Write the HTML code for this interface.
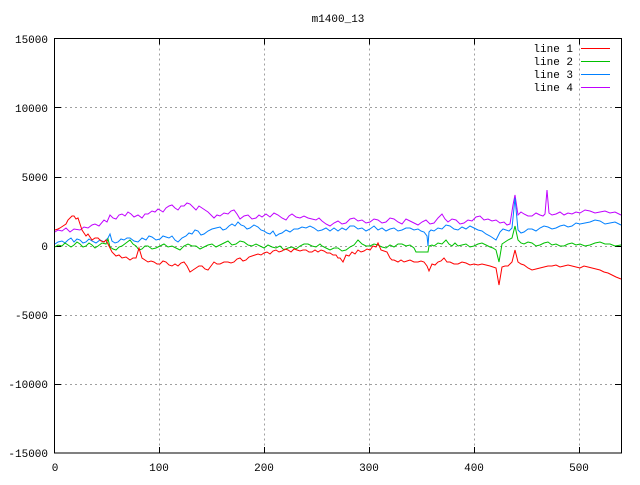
<!DOCTYPE html>
<html><head><style>
html,body{margin:0;padding:0;background:#fff}
svg text{font-family:"Liberation Mono","DejaVu Sans Mono",monospace;font-size:11px;fill:#000}
</style></head><body>
<svg width="640" height="480" xmlns="http://www.w3.org/2000/svg">
<rect width="640" height="480" fill="#fff"/>
<g stroke="#a0a0a0" stroke-width="1" stroke-dasharray="2,3" fill="none">
<path d="M159.5 38.5V453M264.5 38.5V453M369.5 38.5V453M474.5 38.5V453M579.5 38.5V453"/>
<path d="M55 107.5H621.5M55 177.5H621.5M55 246.5H621.5M55 315.5H621.5M55 384.5H621.5"/>
</g>
<g stroke="#000" stroke-width="1" fill="none">
<rect x="54.5" y="38.5" width="567" height="414.5"/>
<path d="M55 107.5h6M55 177.5h6M55 246.5h6M55 315.5h6M55 384.5h6M621 107.5h-6M621 177.5h-6M621 246.5h-6M621 315.5h-6M621 384.5h-6"/>
<path d="M159.5 453v-6M264.5 453v-6M369.5 453v-6M474.5 453v-6M579.5 453v-6M159.5 38.5v6M264.5 38.5v6M369.5 38.5v6M474.5 38.5v6M579.5 38.5v6"/>
</g>
<g text-anchor="end">
<text x="48" y="43">15000</text><text x="48" y="112">10000</text><text x="48" y="181">5000</text>
<text x="48" y="250">0</text><text x="48" y="319">-5000</text><text x="48" y="388">-10000</text><text x="48" y="457">-15000</text>
</g>
<g text-anchor="middle">
<text x="55" y="471">0</text><text x="159" y="471">100</text><text x="264" y="471">200</text>
<text x="369" y="471">300</text><text x="474" y="471">400</text><text x="579" y="471">500</text>
<text x="338" y="22">m1400_13</text>
</g>
<g text-anchor="end">
<text x="573" y="52">line 1</text><text x="573" y="65">line 2</text><text x="573" y="78">line 3</text><text x="573" y="91">line 4</text>
</g>
<g stroke-width="1" fill="none">
<path d="M581 48.5h29" stroke="#ff0000"/>
<path d="M581 61.5h29" stroke="#00c000"/>
<path d="M581 74.5h29" stroke="#0080ff"/>
<path d="M581 87.5h29" stroke="#c000ff"/>
</g>
<g fill="none" stroke-width="1">
<polyline stroke="#c000ff" points="55,232 58,230 62,231 66,228 70,232 74,229 80,230 84,227 88,228 92,225 95,224 99,226 104,220 107,222 110,215 113,218 116,219 119,215 122,214 125,216 128,212 131,214 134,217 138,215 142,218 145,214 148,214 152,211 155,212 158,209 160,210 163,212 166,208 169,206 172,205 175,208 178,210 181,206 184,206 187,203 190,204 193,207 196,210 199,206 202,208 205,210 208,212 211,215 214,218 217,215 220,216 224,213 228,214 231,211 234,210 237,214 240,219 244,216 248,215 252,219 256,218 259,215 262,217 266,214 270,217 274,213 278,215 282,218 286,220 289,216 292,214 296,217 300,218 304,216 308,218 312,219 316,220 319,218 322,221 326,224 330,226 334,223 338,221 342,224 346,223 350,219 354,218 358,221 362,220 366,223 370,222 374,219 378,220 382,223 386,222 390,218 394,219 398,222 402,224 406,219 410,221 414,223 418,225 422,222 426,220 430,224 434,223 438,218 442,214 445,219 448,222 452,219 456,220 460,224 464,223 468,220 472,221 476,217 480,216 484,220 488,219 492,221 496,220 500,223 504,222 507,225 510,224 513,205 515,195 518,215 521,212 524,214 528,216 532,216 536,213 540,215 543,216 545,214 547,190 549,213 552,215 556,214 560,212 564,215 568,213 572,214 576,212 580,213 585,210 590,211 595,213 600,212 605,211 610,213 615,212 621,215"/>
<polyline stroke="#0080ff" points="55,244 58,242 62,241 65,243 68,240 71,238 74,242 77,239 80,240 83,243 86,242 89,239 92,241 96,243 100,240 104,242 108,238 110,234 112,241 115,243 118,242 121,239 124,240 127,238 130,238 134,241 138,242 142,238 146,240 149,236 152,237 156,240 160,239 163,236 166,237 169,238 172,236 175,240 178,242 182,238 186,236 189,233 192,234 195,230 198,231 201,235 204,234 208,231 212,229 216,228 220,227 223,230 226,229 229,226 232,224 235,226 238,222 241,225 244,226 247,229 250,228 254,225 258,227 261,230 264,231 267,233 270,234 273,231 276,236 279,234 282,233 286,230 290,232 294,229 298,229 302,227 306,228 310,226 314,228 318,231 322,230 326,228 330,231 334,228 338,231 342,228 346,230 350,226 354,226 358,229 362,228 366,231 370,229 374,226 378,230 382,228 386,231 390,229 394,228 398,231 402,230 406,228 410,228 414,230 418,229 421,231 424,232 427,236 428,246 429,232 431,230 434,231 438,228 442,229 446,225 450,226 454,229 458,230 462,227 466,229 470,226 474,228 478,230 482,231 486,234 490,236 493,238 496,240 500,232 503,229 506,230 509,231 512,228 515,198 518,230 521,233 524,232 528,229 532,229 536,231 540,228 544,226 548,227 552,229 556,228 560,226 564,225 568,227 572,226 576,223 580,224 585,223 590,222 595,220 600,221 605,224 610,223 615,222 621,225"/>
<polyline stroke="#00c000" points="55,247 58,245 62,246 65,243 68,245 71,247 74,245 77,242 80,244 83,247 86,246 89,243 92,245 95,248 98,246 102,243 106,244 108,239 110,247 113,249 116,250 119,247 122,246 126,243 130,240 133,244 136,246 139,250 142,249 145,246 148,246 152,249 156,248 160,246 164,244 168,247 172,246 176,248 180,250 184,246 188,244 192,246 196,246 200,249 204,247 208,245 212,244 216,247 220,245 224,243 228,241 232,245 236,244 240,241 244,242 248,245 252,246 256,244 260,246 264,248 268,245 272,247 276,248 280,246 284,250 288,248 292,247 296,249 300,246 304,244 308,244 312,246 316,247 320,244 322,246 326,248 330,250 334,248 338,248 342,251 346,250 350,247 354,245 358,240 362,244 366,246 370,246 374,244 378,245 382,247 386,248 390,245 394,247 398,244 402,244 406,246 410,245 414,248 416,252 428,252 429,246 432,245 434,246 438,243 442,244 446,240 449,244 452,246 455,243 458,246 462,245 466,244 470,247 474,246 478,244 482,243 486,245 490,247 493,248 496,250 499,262 502,244 505,242 508,240 512,238 515,226 518,240 521,243 524,244 528,242 532,243 536,246 540,245 544,243 548,242 552,245 556,244 560,246 564,246 568,244 572,243 576,245 580,244 585,246 590,245 595,243 600,242 605,244 610,244 615,246 621,245"/>
<polyline stroke="#ff0000" points="55,230 58,229 60,228 63,226 66,224 68,220 70,218 72,216 74,216 76,219 78,218 80,224 82,230 84,233 86,236 88,234 92,240 95,238 98,238 101,241 104,242 106,240 108,244 110,248 112,252 114,254 116,256 119,255 122,258 126,257 130,260 133,258 136,258 139,248 142,258 145,260 148,262 151,261 154,262 157,264 160,264 163,261 166,262 169,265 172,266 175,264 178,266 181,263 184,262 187,266 190,272 193,270 196,268 199,266 202,266 205,269 208,270 211,266 214,262 217,264 220,264 224,262 228,262 231,263 234,262 237,259 240,258 243,261 246,260 249,257 252,256 255,255 258,254 261,255 264,253 267,252 270,254 273,251 276,250 279,252 282,251 285,249 288,250 291,252 294,249 297,250 300,251 303,250 306,250 309,252 312,252 315,250 318,252 321,250 324,251 327,253 330,253 333,255 336,255 338,258 340,258 343,262 346,255 349,256 352,252 355,254 358,250 361,252 364,251 367,249 370,250 373,246 376,247 378,243 381,250 384,251 387,252 390,258 392,260 394,260 398,262 401,260 404,262 407,261 410,260 414,262 418,262 421,261 424,262 427,266 429,271 432,264 435,265 438,262 441,261 444,258 447,262 450,262 454,264 458,264 462,262 466,263 470,265 474,264 478,265 482,264 486,265 490,266 493,267 496,268 499,285 502,267 505,266 508,266 512,262 515,250 518,262 521,264 524,265 528,268 532,270 536,269 540,268 544,267 548,266 552,266 556,265 560,267 564,266 568,265 572,266 576,267 580,268 584,266 588,267 592,268 596,269 600,270 604,272 608,273 612,275 616,277 621,279"/>
</g>
</svg>
</body></html>
